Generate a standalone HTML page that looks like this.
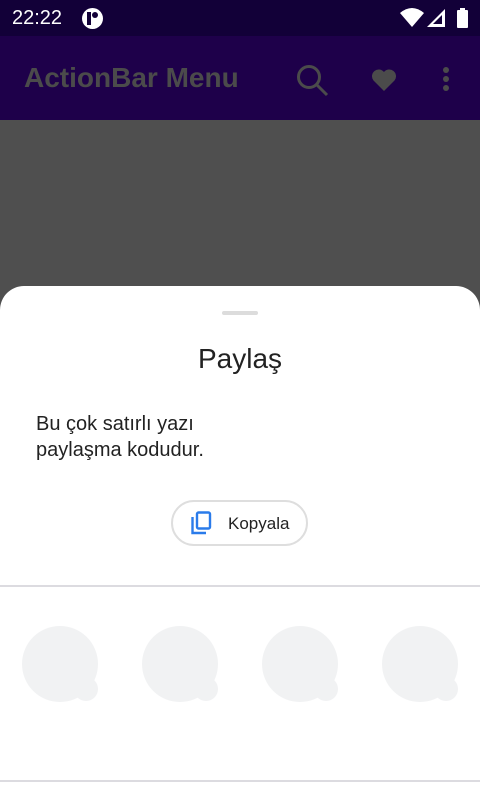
<!DOCTYPE html>
<html><head><meta charset="utf-8"><style>
*{margin:0;padding:0;box-sizing:border-box}
body{width:480px;height:800px;overflow:hidden;background:#4f4f4f;font-family:"Liberation Sans",Roboto,sans-serif;position:relative}
.sb{position:absolute;top:0;left:0;width:480px;height:36px;background:#120038;color:#fff}
.ab{position:absolute;top:36px;left:0;width:480px;height:84px;background:#1e004a}
.sheet{position:absolute;top:286px;left:0;width:480px;height:514px;background:#fff;border-radius:24px 24px 0 0}
.av{position:absolute;top:340px;width:76px;height:76px;border-radius:50%;background:#f1f2f3}
.av2{position:absolute;top:391px;width:24px;height:24px;border-radius:50%;background:#f1f2f3}
</style></head><body>
<div class="sb">
<div style="position:absolute;left:12px;top:7px;font-size:20px">22:22</div>
<div style="position:absolute;left:82px;top:8px;width:21px;height:21px;border-radius:50%;background:#fff"><div style="position:absolute;left:5px;top:4px;width:4px;height:13px;background:#120038"></div><div style="position:absolute;left:10px;top:4px;width:6px;height:6px;border-radius:50%;background:#120038"></div></div>
<svg style="position:absolute;left:400px;top:7px" width="70" height="22"><path d="M0 6 Q12 -4 24 6 L12 20Z" fill="#fff"/><path d="M45 2 V20 H27Z" fill="#fff"/><path d="M42 8 V17 H33Z" fill="#120038"/><rect x="57" y="3" width="11" height="18" rx="1" fill="#fff"/><rect x="60" y="1" width="5" height="3" fill="#fff"/></svg>
</div>
<div class="ab">
<div style="position:absolute;left:24px;top:26px;font-size:28px;font-weight:bold;color:#4b4b4b">ActionBar Menu</div>
<svg style="position:absolute;left:296px;top:28px" width="34" height="34"><circle cx="13" cy="13" r="10.5" stroke="#4b4b4b" stroke-width="3" fill="none"/><path d="M21 21 L31 31" stroke="#4b4b4b" stroke-width="3"/></svg>
<svg style="position:absolute;left:371px;top:32px" width="26" height="24"><path d="M13 23 L2.5 12.5 A6 6 0 0 1 13 4 A6 6 0 0 1 23.5 12.5Z" fill="#4b4b4b"/></svg>
<svg style="position:absolute;left:440px;top:30px" width="12" height="30"><circle cx="6" cy="4" r="3" fill="#4b4b4b"/><circle cx="6" cy="13" r="3" fill="#4b4b4b"/><circle cx="6" cy="22" r="3" fill="#4b4b4b"/></svg>
</div>
<div class="sheet">
<div style="position:absolute;left:222px;top:25px;width:36px;height:4px;border-radius:2px;background:#dcdcdc"></div>
<div style="position:absolute;left:0;width:480px;top:57px;text-align:center;font-size:28px;color:#222">Paylaş</div>
<div style="position:absolute;left:36px;top:125px;font-size:20px;line-height:26px;color:#222">Bu çok satırlı yazı<br>paylaşma kodudur.</div>
<div style="position:absolute;left:171px;top:214px;width:137px;height:46px;border:2px solid #dedede;border-radius:23px">
<svg style="position:absolute;left:17px;top:9px" width="24" height="24"><rect x="7" y="1.5" width="13" height="16" rx="1.5" fill="none" stroke="#2a7bea" stroke-width="2.4"/><path d="M2.5 6 V22 H16" fill="none" stroke="#2a7bea" stroke-width="2.4"/></svg>
<div style="position:absolute;left:55px;top:12px;font-size:17px;color:#222">Kopyala</div>
</div>
<div style="position:absolute;left:0;top:299px;width:480px;height:2px;background:#dcdbe0"></div>
<div class="av" style="left:22px"></div><div class="av2" style="left:74px"></div>
<div class="av" style="left:142px"></div><div class="av2" style="left:194px"></div>
<div class="av" style="left:262px"></div><div class="av2" style="left:314px"></div>
<div class="av" style="left:382px"></div><div class="av2" style="left:434px"></div>
<div style="position:absolute;left:0;top:494px;width:480px;height:2px;background:#dcdbe0"></div>
</div>
</body></html>
